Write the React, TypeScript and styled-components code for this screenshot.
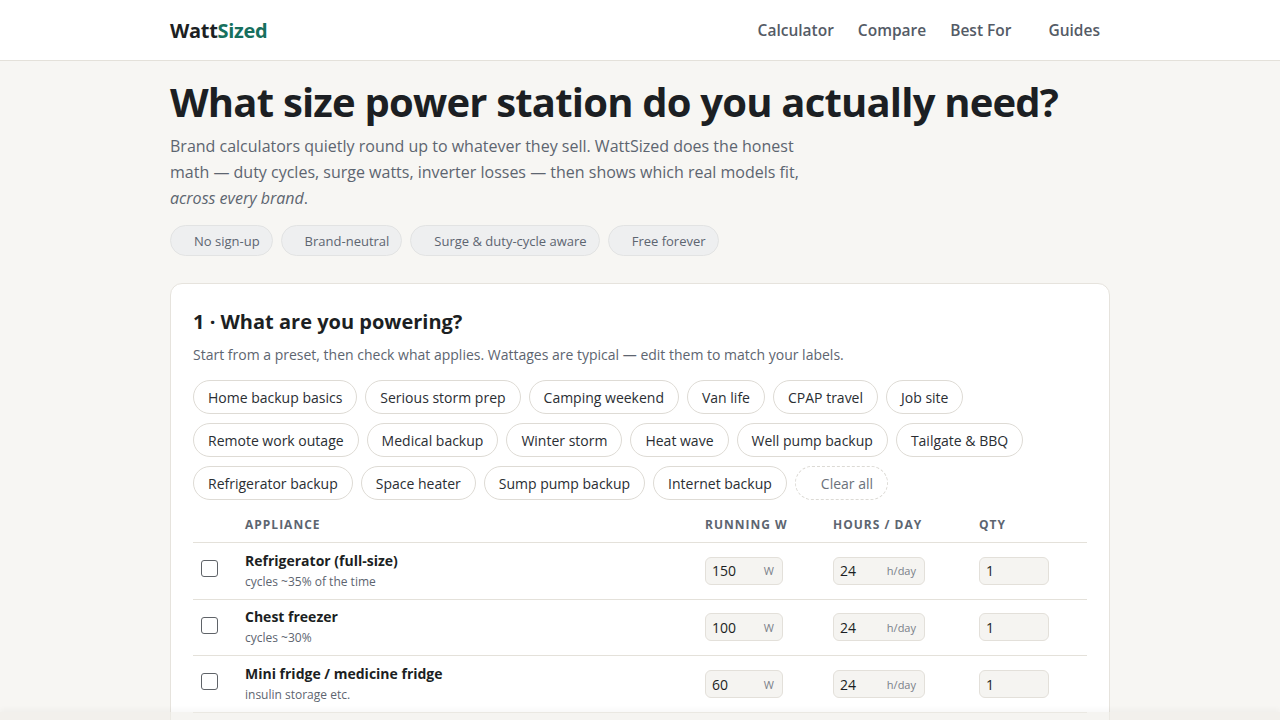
import styled, { createGlobalStyle } from "styled-components";

const GlobalStyle = createGlobalStyle`
  * { box-sizing: border-box; }
  body {
    margin: 0;
    background: #f7f6f3;
    font-family: "Open Sans", "Noto Sans", sans-serif;
    color: #1c1f23;
  }
`;

const Header = styled.header`
  height: 61px;
  background: #ffffff;
  border-bottom: 1px solid #e4e1da;
`;

const Inner = styled.div`
  width: 940px;
  margin: 0 auto;
`;

const HeaderInner = styled(Inner)`
  height: 100%;
  display: flex;
  align-items: center;
  justify-content: space-between;
`;

const Logo = styled.div`
  font-size: 20px;
  font-weight: 700;
  letter-spacing: -0.3px;
  color: #1c1f23;

  span {
    color: #17705e;
  }
`;

const Nav = styled.nav`
  display: flex;
  gap: 24px;
  padding-right: 10px;
`;

const NavLink = styled.a<{ $wide?: boolean }>`
  font-size: 15.5px;
  font-weight: 600;
  color: #545b66;
  text-decoration: none;
  margin-left: ${(p) => (p.$wide ? "13px" : "0")};
`;

const Hero = styled.section`
  padding-top: 16px;
`;

const Title = styled.h1`
  margin: 0;
  font-size: 40px;
  line-height: 50px;
  font-weight: 700;
  letter-spacing: -0.8px;
  color: #1c1f23;
`;

const Lead = styled.p`
  margin: 6px 0 0;
  max-width: 640px;
  font-size: 16px;
  line-height: 26px;
  color: #5d6570;
`;

const Badges = styled.div`
  display: flex;
  gap: 8px;
  margin-top: 14px;
`;

const Badge = styled.span`
  height: 31px;
  display: inline-flex;
  align-items: center;
  padding: 0 12px 0 23px;
  border-radius: 999px;
  background: #eeeff0;
  border: 1px solid #e2e3e3;
  font-size: 13px;
  color: #5d6570;
`;

const Card = styled.section`
  margin-top: 27px;
  background: #ffffff;
  border: 1px solid #e6e3dd;
  border-radius: 12px;
  padding: 23px 22px 0;
`;

const CardTitle = styled.h2`
  margin: 0;
  font-size: 20px;
  line-height: 30px;
  font-weight: 700;
  color: #1c1f23;
`;

const CardSub = styled.p`
  margin: 8px 0 0;
  font-size: 14px;
  line-height: 20px;
  color: #5d6570;
`;

const Presets = styled.div`
  display: flex;
  flex-wrap: wrap;
  gap: 9px 8px;
  margin-top: 15px;
`;

const Preset = styled.button<{ $dashed?: boolean }>`
  height: 34px;
  padding: 0 14px;
  border-radius: 999px;
  background: #ffffff;
  border: 1px ${(p) => (p.$dashed ? "dashed #dcdad5" : "solid #dedbd5")};
  font-family: inherit;
  font-size: 14px;
  color: ${(p) => (p.$dashed ? "#6b717a" : "#2a2e33")};
  padding-left: ${(p) => (p.$dashed ? "25px" : "14px")};
`;

const Table = styled.div`
  margin-top: 7px;
`;

const Grid = styled.div`
  display: grid;
  grid-template-columns: 52px 460px 128px 146px 1fr;
  align-items: center;
`;

const HeadRow = styled(Grid)`
  height: 36px;
  border-bottom: 1px solid #e4e1da;
`;

const HeadCell = styled.div`
  font-size: 12px;
  font-weight: 700;
  letter-spacing: 1px;
  text-transform: uppercase;
  color: #5d6570;
`;

const Row = styled(Grid)`
  height: 56.67px;
  border-bottom: 1px solid #e4e1da;
`;

const Check = styled.span`
  align-self: start;
  width: 17px;
  height: 17px;
  margin: 17px 0 0 8px;
  border: 1px solid #5f6368;
  border-radius: 3px;
  background: #ffffff;
`;

const Name = styled.div`
  font-size: 14px;
  font-weight: 700;
  line-height: 20px;
  color: #1c1f23;
`;

const Note = styled.div`
  margin-top: 2px;
  font-size: 12px;
  line-height: 18px;
  color: #5d6570;
`;

const Field = styled.div<{ $w: number }>`
  width: ${(p) => p.$w}px;
  height: 28px;
  display: flex;
  align-items: center;
  justify-content: space-between;
  padding: 0 8px 0 6px;
  background: #f5f4f1;
  border: 1px solid #e3e0da;
  border-radius: 6px;
  font-size: 14px;
  color: #1c1f23;
`;

const Unit = styled.span`
  font-size: 11px;
  color: #7a8089;
`;

const BottomFade = styled.div`
  position: fixed;
  left: 0;
  right: 0;
  bottom: 0;
  height: 8px;
  background: rgba(238, 236, 232, 0.6);
  box-shadow: 0 -2px 6px rgba(0, 0, 0, 0.04);
`;

const presets = [
  "Home backup basics",
  "Serious storm prep",
  "Camping weekend",
  "Van life",
  "CPAP travel",
  "Job site",
  "Remote work outage",
  "Medical backup",
  "Winter storm",
  "Heat wave",
  "Well pump backup",
  "Tailgate & BBQ",
  "Refrigerator backup",
  "Space heater",
  "Sump pump backup",
  "Internet backup",
];

const appliances = [
  { name: "Refrigerator (full-size)", note: "cycles ~35% of the time", watts: 150 },
  { name: "Chest freezer", note: "cycles ~30%", watts: 100 },
  { name: "Mini fridge / medicine fridge", note: "insulin storage etc.", watts: 60 },
  { name: "Sump pump", note: "runs intermittently", watts: 800 },
];

export default function App() {
  return (
    <>
      <GlobalStyle />
      <Header>
        <HeaderInner>
          <Logo>
            Watt<span>Sized</span>
          </Logo>
          <Nav>
            <NavLink>Calculator</NavLink>
            <NavLink>Compare</NavLink>
            <NavLink>Best For</NavLink>
            <NavLink $wide>Guides</NavLink>
          </Nav>
        </HeaderInner>
      </Header>
      <Inner>
        <Hero>
          <Title>What size power station do you actually need?</Title>
          <Lead>
            Brand calculators quietly round up to whatever they sell. WattSized does the honest
            math — duty cycles, surge watts, inverter losses — then shows which real models fit,{" "}
            <em>across every brand</em>.
          </Lead>
          <Badges>
            <Badge>No sign-up</Badge>
            <Badge>Brand-neutral</Badge>
            <Badge>Surge &amp; duty-cycle aware</Badge>
            <Badge>Free forever</Badge>
          </Badges>
        </Hero>
        <Card>
          <CardTitle>1 · What are you powering?</CardTitle>
          <CardSub>
            Start from a preset, then check what applies. Wattages are typical — edit them to match
            your labels.
          </CardSub>
          <Presets>
            {presets.map((p) => (
              <Preset key={p}>{p}</Preset>
            ))}
            <Preset $dashed>Clear all</Preset>
          </Presets>
          <Table>
            <HeadRow>
              <div />
              <HeadCell>Appliance</HeadCell>
              <HeadCell>Running W</HeadCell>
              <HeadCell>Hours / day</HeadCell>
              <HeadCell>Qty</HeadCell>
            </HeadRow>
            {appliances.map((a) => (
              <Row key={a.name}>
                <Check />
                <div>
                  <Name>{a.name}</Name>
                  <Note>{a.note}</Note>
                </div>
                <Field $w={78}>
                  {a.watts}
                  <Unit>W</Unit>
                </Field>
                <Field $w={92}>
                  24
                  <Unit>h/day</Unit>
                </Field>
                <Field $w={70}>1</Field>
              </Row>
            ))}
          </Table>
        </Card>
      </Inner>
      <BottomFade />
    </>
  );
}
